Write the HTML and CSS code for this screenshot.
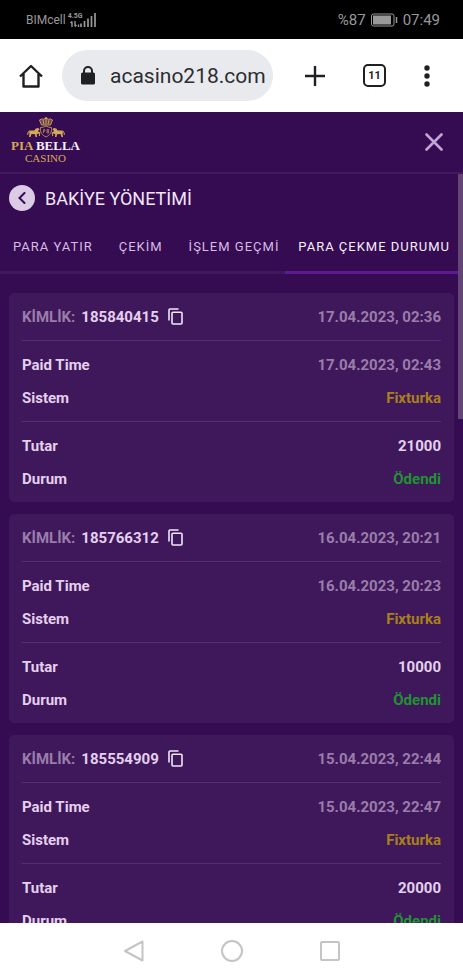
FILE: index.html
```
<!DOCTYPE html>
<html lang="tr">
<head>
    <meta charset="UTF-8">
    <meta name="viewport" content="width=device-width, initial-scale=1.0">
    <title>Bakiye Yönetimi</title>
    <link rel="stylesheet" href="styles.css">
</head>
<body>
    <!-- Phone status bar -->
    <div class="status-bar">
        <div class="status-group">
            <span class="carrier">BIMcell</span>
            <span class="network">
                <span>4.5G</span>
                <svg width="10" height="6" viewBox="0 0 10 6"><path d="M2 .5V6M.5 2L2 .5M5 0v5.500M5 5.500L6.500 4M8.500 3.500V6" fill="none" stroke="currentColor" stroke-width="1.400"/></svg>
            </span>
            <svg class="signal" width="16" height="15" viewBox="0 0 16 15"><path d="M1 11.500V15M4.500 9v6M8 6.500V15M11.500 4v11M15 1v14" stroke="currentColor" stroke-width="1.700"/></svg>
        </div>
        <div class="status-group status-right">
            <span>%87</span>
            <svg width="27" height="14" viewBox="0 0 27 14"><rect x=".5" y="1" width="22.500" height="12" rx="2" fill="none" stroke="currentColor"/><rect x="2" y="2.500" width="18" height="9" fill="currentColor"/><path d="M25.500 4v6" stroke="currentColor" stroke-width="1.500"/></svg>
            <span>07:49</span>
        </div>
    </div>

    <!-- Browser toolbar -->
    <div class="browser-bar">
        <button class="icon-btn" aria-label="Ana sayfa">
            <svg width="24" height="24" viewBox="0 0 24 24"><path d="M1 12.500L12 2l11 10.500M4.500 10v12.500h15V10" fill="none" stroke="currentColor" stroke-width="2.400" stroke-linejoin="round"/></svg>
        </button>
        <div class="address">
            <svg width="16" height="19" viewBox="0 0 16 19"><rect x="1" y="6.500" width="14" height="12" rx="1.500" fill="currentColor"/><path d="M4 8V5a4 4 0 0 1 8 0v3" fill="none" stroke="currentColor" stroke-width="2"/></svg>
            <input type="text" value="acasino218.com" aria-label="Adres">
        </div>
        <div class="browser-actions">
            <button class="icon-btn" aria-label="Yeni sekme">
                <svg width="20" height="20" viewBox="0 0 20 20"><path d="M10 0v20M0 10h20" stroke="currentColor" stroke-width="2.400"/></svg>
            </button>
            <button class="tab-count" aria-label="Sekmeler">11</button>
            <button class="icon-btn" aria-label="Menü">
                <svg width="6" height="22" viewBox="0 0 6 22" fill="currentColor"><circle cx="3" cy="3" r="2.700"/><circle cx="3" cy="11" r="2.700"/><circle cx="3" cy="19" r="2.700"/></svg>
            </button>
        </div>
    </div>

    <header class="site-header">
        <a href="#" class="logo">
            <svg width="38" height="21" viewBox="0 0 38 21" fill="none" stroke="#d5aa57">
                <path d="M14.500 8L12.500 3q2-1.500 4-.8Q19 .5 21.500 2.200q2-.7 4 .8L23.500 8z" fill="#d5aa57" fill-opacity=".35" stroke-width=".9"/>
                <path d="M19 0v7M17.800 1h2.400M16 3l.8 4M22 3l-.8 4" stroke-width=".9"/>
                <path d="M13.500 10.500q3 0 5.500-1.500 2.500 1.500 5.500 1.500c.5 5-1.500 7.500-5.500 9.500-4-2-6-4.500-5.500-9.500z" stroke-width=".8"/>
                <path d="M16.500 16v-3.500h1.300v1.800h-1.300M20 12.500V16h1.600v-3.500H20M20 14.200h1.600" stroke-width=".6"/>
                <g id="horse" fill="#d5aa57" stroke="none">
                    <path d="M12 11.500l-1.500-.5-2 .8-1 1.700H3.500L2 15l.5 2L2 20h1.500l1-3 3.500.2.5 2.800H10l-.3-3 2.300-.5-.2 2.500h1l.4-3.500-2-1 .3-1.500 1 .2z"/>
                    <path d="M3 14Q.8 13.500.7 18" fill="none" stroke="#d5aa57"/>
                </g>
                <use href="#horse" transform="matrix(-1 0 0 1 38 0)"/>
            </svg>
            <span class="logo-name"><span class="gold">PIA</span> BELLA</span>
            <span class="logo-sub">CASINO</span>
        </a>
        <button class="close-btn" aria-label="Kapat">
            <svg width="18" height="18" viewBox="0 0 18 18"><path d="M1.500 1.500l15 15M16.500 1.500l-15 15" stroke="currentColor" stroke-width="2.600" stroke-linecap="round"/></svg>
        </button>
    </header>

    <main class="content">
        <div class="page-title">
            <button class="back-btn" aria-label="Geri">
                <svg width="8" height="12" viewBox="0 0 8 12"><path d="M6.500 1L1.500 6l5 5" fill="none" stroke="currentColor" stroke-width="2" stroke-linecap="round"/></svg>
            </button>
            <h1>BAKİYE YÖNETİMİ</h1>
        </div>

        <nav class="tabs">
            <button class="tab">PARA YATIR</button>
            <button class="tab">ÇEKİM</button>
            <button class="tab tab-cut">İŞLEM GEÇMİ</button>
            <button class="tab active">PARA ÇEKME DURUMU</button>
        </nav>

        <div class="cards" id="cards">
            <!-- Withdrawals are inserted here -->
        </div>
        <div class="scroll-thumb"></div>
    </main>

    <!-- Phone navigation -->
    <footer class="phone-nav">
        <button aria-label="Geri"><svg width="22" height="22" viewBox="0 0 22 22"><path d="M19.500 1.500v19L2 11z"/></svg></button>
        <button aria-label="Ana ekran"><svg width="22" height="22" viewBox="0 0 22 22"><circle cx="11" cy="11" r="10"/></svg></button>
        <button aria-label="Son uygulamalar"><svg width="22" height="22" viewBox="0 0 22 22"><rect x="2" y="2" width="18" height="18" rx="1"/></svg></button>
    </footer>

    <script>
        const withdrawals = [
            { id: '185840415', date: '17.04.2023, 02:36', paid: '17.04.2023, 02:43', amount: '21000' },
            { id: '185766312', date: '16.04.2023, 20:21', paid: '16.04.2023, 20:23', amount: '10000' },
            { id: '185554909', date: '15.04.2023, 22:44', paid: '15.04.2023, 22:47', amount: '20000' }
        ];

        document.getElementById('cards').innerHTML = withdrawals.map(item => `
            <article class="card">
                <div class="card-head">
                    <span class="muted">KİMLİK:</span>
                    <span class="card-id">${item.id}</span>
                    <button class="copy-btn" aria-label="Kopyala">
                        <svg width="15" height="17" viewBox="0 0 15 17"><path d="M1 12.500V2q0-1 1-1h8.500M5 4.200h8q1 0 1 1V15q0 1-1 1H5q-1 0-1-1V5.200q0-1 1-1z" fill="none" stroke="currentColor" stroke-width="1.600"/></svg>
                    </button>
                    <time class="muted">${item.date}</time>
                </div>
                <dl class="card-group">
                    <div class="row"><dt>Paid Time</dt><dd class="muted">${item.paid}</dd></div>
                    <div class="row"><dt>Sistem</dt><dd class="system">Fixturka</dd></div>
                </dl>
                <dl class="card-group">
                    <div class="row"><dt>Tutar</dt><dd>${item.amount}</dd></div>
                    <div class="row"><dt>Durum</dt><dd class="paid">Ödendi</dd></div>
                </dl>
            </article>
        `).join('');
    </script>
</body>
</html>
```
FILE: styles.css
```
/* Global Styles */
* {
    margin: 0;
    padding: 0;
    box-sizing: border-box;
}

body {
    height: 100vh;
    display: flex;
    flex-direction: column;
    overflow: hidden;
    background-color: #350b52;
    color: #e4d0ec;
    font-family: Roboto, sans-serif;
}

button {
    background: none;
    border: none;
    color: inherit;
    font-family: inherit;
    cursor: pointer;
}

svg {
    display: block;
    flex-shrink: 0;
}

/* Status bar */
.status-bar {
    height: 39px;
    flex-shrink: 0;
    padding: 0 23px 0 26px;
    display: flex;
    justify-content: space-between;
    align-items: center;
    background-color: #000;
    color: #999;
    font-size: 12px;
}

.status-group {
    display: flex;
    align-items: center;
    gap: 2px;
}

.status-right {
    gap: 5px;
    font-size: 15px;
}

.network {
    display: flex;
    flex-direction: column;
    align-items: center;
    font-size: 7px;
    line-height: 9px;
    font-weight: 700;
}

.signal {
    margin-left: -5px;
}

/* Browser toolbar */
.browser-bar {
    height: 73px;
    flex-shrink: 0;
    padding: 0 33px 0 19px;
    display: flex;
    align-items: center;
    gap: 19px;
    background-color: #fff;
    color: #1f2023;
}

.address {
    flex: 1;
    min-width: 0;
    height: 51px;
    padding: 0 6px 0 18px;
    display: flex;
    align-items: center;
    gap: 14px;
    border-radius: 26px;
    background-color: #e9eaee;
}

.address input {
    width: 100%;
    min-width: 0;
    border: none;
    outline: none;
    background: none;
    color: #2c2d31;
    font-family: inherit;
    font-size: 21px;
}

.browser-actions {
    display: flex;
    align-items: center;
    gap: 38px;
    margin-left: 13px;
}

.tab-count {
    width: 23px;
    height: 23px;
    border: 2px solid #1f2023;
    border-radius: 5px;
    font-size: 11px;
    font-weight: 700;
}

/* Site header */
.site-header {
    height: 62px;
    flex-shrink: 0;
    padding: 0 20px 4px 11px;
    display: flex;
    justify-content: space-between;
    align-items: center;
    border-bottom: 2px solid #44185f;
}

.logo {
    display: flex;
    flex-direction: column;
    align-items: center;
    color: #f5effa;
    font-family: "Liberation Serif", serif;
    text-decoration: none;
}

.logo-name {
    font-size: 13px;
    line-height: 15px;
    font-weight: 700;
}

.gold,
.logo-sub {
    color: #d5aa57;
}

.logo-sub {
    font-size: 11px;
    line-height: 10px;
}

.close-btn {
    margin-top: 4px;
    color: #c3a5d3;
}

/* Page */
.content {
    position: relative;
    flex: 1;
    min-height: 0;
    overflow: hidden;
}

.page-title {
    height: 48px;
    padding: 0 9px;
    display: flex;
    align-items: center;
    gap: 10px;
}

.page-title h1 {
    color: #f2e6f7;
    font-size: 18px;
    font-weight: 400;
}

.back-btn {
    width: 26px;
    height: 26px;
    display: flex;
    justify-content: center;
    align-items: center;
    border-radius: 50%;
    background-color: #dccbe5;
    color: #350b52;
}

/* Tabs */
.tabs {
    height: 52px;
    display: flex;
}

.tab {
    flex-shrink: 0;
    padding: 0 13px;
    border-bottom: 3px solid #40165d;
    color: #d6bce1;
    font-size: 13px;
    letter-spacing: 1px;
    white-space: nowrap;
}

.tab-cut {
    flex: 1;
    min-width: 0;
    padding-right: 0;
    text-align: left;
}

.tab.active {
    border-color: #5e1a94;
    color: #f8effc;
}

/* Cards */
.cards {
    padding: 19px 9px;
    display: flex;
    flex-direction: column;
    gap: 12px;
}

.card {
    padding: 0 13px;
    border-radius: 5px;
    background-color: #3f185c;
    font-size: 15px;
    font-weight: 700;
}

.card-head {
    height: 47px;
    display: flex;
    align-items: center;
    gap: 6px;
}

.card-head time {
    margin-left: auto;
}

.copy-btn {
    margin-left: 3px;
    color: #f2e6f7;
}

.card-group {
    padding: 7px 0;
    border-top: 1px solid #543070;
}

.row {
    height: 33px;
    display: flex;
    justify-content: space-between;
    align-items: center;
}

.muted {
    color: #9a7daa;
}

.system {
    color: #a8801b;
}

.paid {
    color: #1f9231;
}

.scroll-thumb {
    position: absolute;
    top: 0;
    right: 0;
    width: 5px;
    height: 245px;
    background-color: #614673;
}

/* Phone navigation */
.phone-nav {
    height: 55px;
    flex-shrink: 0;
    display: flex;
    justify-content: center;
    align-items: center;
    gap: 76px;
    background-color: #fff;
}

.phone-nav svg {
    fill: none;
    stroke: #c4c4c4;
    stroke-width: 2;
    stroke-linejoin: round;
}
```
